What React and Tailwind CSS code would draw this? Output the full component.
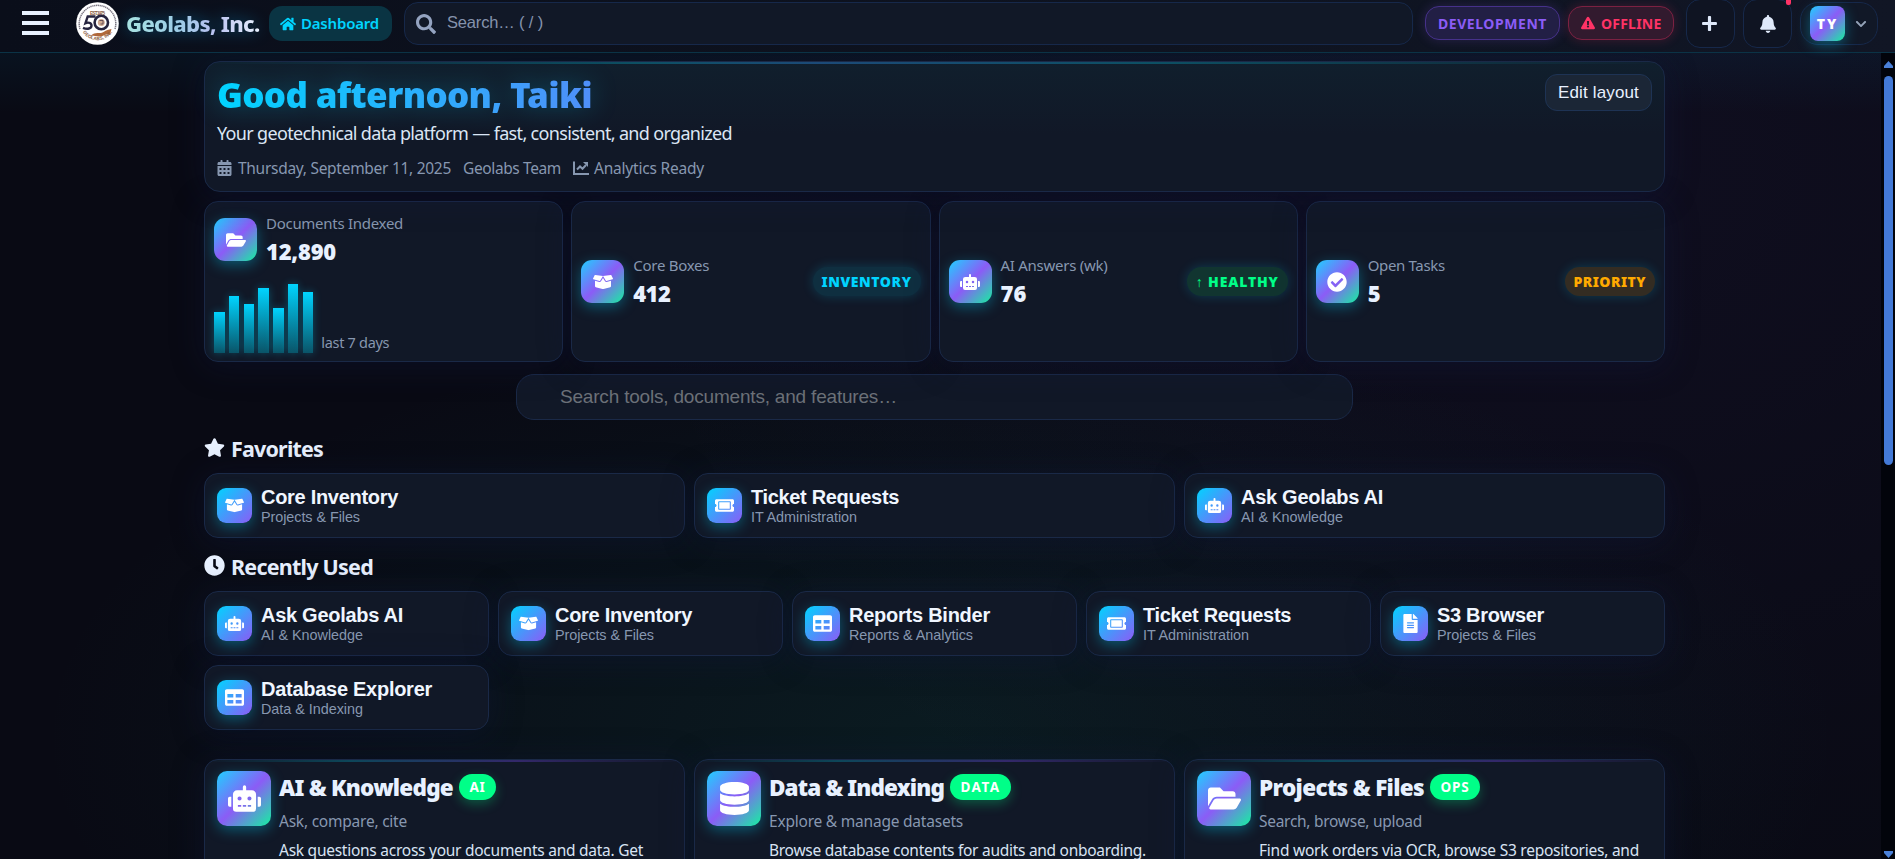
import React from "react";
import {
  FaHome, FaSearch, FaExclamationTriangle, FaPlus, FaBell, FaChevronDown,
  FaCalendarAlt, FaFolderOpen, FaBoxOpen, FaRobot, FaCheckCircle, FaStar,
  FaClock, FaTicketAlt, FaTable, FaFileAlt, FaDatabase,
} from "react-icons/fa";

const SANS = "font-['Noto_Sans','Open_Sans',sans-serif]";
const ARIAL = "font-['Liberation_Sans',Arial,sans-serif]";
const CARD = "bg-[#111827] border border-[#1a2947] shadow-[0_4px_32px_rgba(16,24,60,0.42)]";
const TRI = "bg-[linear-gradient(135deg,#1fd0ff_0%,#8b5cf6_50%,#15f0a0_100%)] shadow-[0_4px_14px_rgba(0,212,255,0.35)]";
const DUO = "bg-[linear-gradient(135deg,#00d4ff_0%,#8b5cf6_100%)] shadow-[0_4px_14px_rgba(0,212,255,0.35)]";

/* Text fitted to a fixed width by adjusting its spacing. */
function Fit({ w, children, className = "" }) {
  const ref = React.useRef(null);
  React.useLayoutEffect(() => {
    const el = ref.current;
    const fit = () => {
      el.style.letterSpacing = "0px";
      const n = el.textContent.length;
      const d = (w - el.getBoundingClientRect().width) / n;
      el.style.letterSpacing = d + "px";
    };
    fit();
    document.fonts.ready.then(fit);
  }, [w]);
  return <span ref={ref} className={"inline-block whitespace-nowrap " + className}>{children}</span>;
}

function ChartLine({ className }) {
  return (
    <svg viewBox="0 0 16 14" className={className} fill="none" stroke="currentColor" strokeWidth="2">
      <path d="M1 .5V13H16" />
      <path d="M4 8.500 7 5.500l2.500 2.300L13 4" />
      <path d="M10 1h5v5z" fill="currentColor" stroke="none" />
    </svg>
  );
}

function Logo() {
  return (
    <svg viewBox="0 0 43 43" className="h-[43px] w-[43px] shrink-0">
      <defs>
        <path id="ring" d="M4.500 24 A17.300 17.300 0 0 0 38.500 24" />
      </defs>
      <circle cx="21.500" cy="21.500" r="21.300" fill="#fff" />
      <path d="M4 27A18.300 18.300 0 1 1 39 27" fill="none" stroke="#4d4858" strokeWidth="1.500" strokeDasharray="1.300 .6" opacity=".75" />
      <text x="21.500" y="12.500" textAnchor="middle" fontFamily="Liberation Sans" fontWeight="700" fontSize="4.600" fill="#8a5a3c" textLength="15">EST.1975</text>
      <path d="M14.500 34c5-5 9-1.500 13-4 3-2 5-2.500 8-3l-1.500 5.500c-5-1-6 1.500-9.500 2-3 .3-5-1.500-10-.5z" fill="#b0683a" />
      <path d="M19.500 14.500h-7.800l-2.200 6.700c2.500-1.200 6-.6 6 2.300 0 3-4 4.300-8.500 2.300" fill="none" stroke="#26243f" strokeWidth="2.400" />
      <circle cx="25.300" cy="20.500" r="6.700" fill="#fff" stroke="#26243f" strokeWidth="2.600" />
      <circle cx="25.300" cy="20.500" r="3.500" fill="#d0ab93" />
      <path d="M23.500 18.500h3.500v3.500h-2.500" stroke="#5b4650" fill="none" strokeWidth=".9" />
      <text fontFamily="Liberation Sans" fontWeight="700" fontSize="4.600" fill="#8a5a3c"><textPath href="#ring" startOffset="50%" textAnchor="middle">GEOLABS, INC.</textPath></text>
    </svg>
  );
}

function Header() {
  return (
    <header className="relative z-20 flex h-[53px] shrink-0 border-b border-[#0b3346] bg-[linear-gradient(90deg,#0a0e1a,#0e1320_60%,#111625)]">
      <div className="ml-[22px] mt-[11px] flex h-[24px] w-[27px] flex-col justify-between">
        <i className="h-1 bg-[#e8f1ff]" /><i className="h-1 bg-[#e8f1ff]" /><i className="h-1 bg-[#e8f1ff]" />
      </div>
      <div className="ml-[27px] mt-[2px]"><Logo /></div>
      <div className="ml-[7px] mt-[7px] w-[143px] text-[22px] leading-[32px] font-extrabold drop-shadow-[0_0_8px_rgba(0,180,255,0.4)]">
        <Fit w={133.500} className="bg-[linear-gradient(90deg,#a7e3e2,#9ccbe6_40%,#b9c2f0_65%,#e8f1ff)] bg-clip-text text-transparent">Geolabs, Inc.</Fit>
      </div>
      <div className="mt-[6px] flex h-[35px] w-[123px] items-center rounded-[13px] bg-[#0a3443] pl-[11px] text-[#00d4ff]">
        <FaHome className="mr-[5px] text-[16px]" />
        <span className="text-[15px] leading-none font-semibold"><Fit w={78}>Dashboard</Fit></span>
      </div>
      <div className="ml-[12px] mt-[2px] flex h-[43px] w-[1009px] items-center rounded-[14px] border border-[#16284a] bg-[#111827] pl-[11px]">
        <FaSearch className="text-[20px] text-[#94a3c0]" />
        <span className={ARIAL + " ml-[11px] -mt-[2px] text-[16.500px] text-[#8593ad]"}><Fit w={96}>Search… ( / )</Fit></span>
      </div>
      <div className="ml-[12px] mt-[6px] flex h-[34px] w-[135px] items-center rounded-[14px] border border-[#46318a] bg-[#221f45] pl-[12px] text-[14px] font-bold text-[#8b5cf6] shadow-[0_0_12px_rgba(139,92,246,0.2)]"><Fit w={109}>DEVELOPMENT</Fit></div>
      <div className="ml-[8px] mt-[6px] flex h-[34px] w-[106px] items-center rounded-[14px] border border-[#7c2142] bg-[#321a2e] pl-[12px] text-[14px] font-bold text-[#ff3366] shadow-[0_0_12px_rgba(255,51,102,0.2)]">
        <FaExclamationTriangle className="mr-[6px] text-[14px]" /><Fit w={60.500}>OFFLINE</Fit>
      </div>
      <div className="ml-[12px] -mt-px flex h-[49px] w-[49px] items-center justify-center rounded-[14px] border border-[#16284a] bg-[#0f1422] pr-[2px] text-[#dfe9fa]"><FaPlus className="text-[17px]" /></div>
      <div className="relative ml-[8px] -mt-px flex h-[49px] w-[49px] items-center justify-center rounded-[14px] border border-[#16284a] bg-[#0f1422] text-[#dfe9fa]">
        <FaBell className="text-[18px]" />
        <i className="absolute right-0 -top-1 h-[9px] w-[5px] rounded-b-[2px] bg-[#ff3366]" />
      </div>
      <div className="ml-[8px] mt-[2px] flex h-[43px] w-[78px] items-center rounded-[18px] border border-[#16284a] bg-[#111827]">
        <div className={TRI + " ml-[9px] flex h-[35px] w-[35px] items-center justify-center rounded-[8px] text-[14px] font-black text-white"}><Fit w={21.500}>TY</Fit></div>
        <FaChevronDown className="ml-[10px] text-[12px] text-[#94a3b8]" />
      </div>
    </header>
  );
}

function Hero() {
  return (
    <section className={CARD + " relative flex h-[131px] justify-between rounded-[16px] bg-[linear-gradient(180deg,#101f2d_0%,#111827_55%)] px-[12px]"}>
      <i className="absolute inset-x-0 top-0 h-[2px] rounded-t-full bg-[linear-gradient(90deg,transparent,#0d5064_30%,#1c4a78_42%,#0d5064_65%,transparent)]" />
      <div>
        <h1 className="mt-[12px] text-[35px] leading-[42px] font-black drop-shadow-[0_0_12px_rgba(0,212,255,0.28)]">
          <Fit w={375} className="bg-[linear-gradient(90deg,#00d4ff,#4f8ff9)] bg-clip-text text-transparent">Good afternoon, Taiki</Fit>
        </h1>
        <p className="mt-[4px] text-[18px] leading-[26px] text-[#dbe6f5]"><Fit w={515}>Your geotechnical data platform — fast, consistent, and organized</Fit></p>
        <div className="mt-[11px] flex items-center text-[15.500px] leading-[22px] text-[#8797b0]">
          <FaCalendarAlt className="mr-[6px] w-[15px] text-[16px]" />
          <Fit w={213}>Thursday, September 11, 2025</Fit>
          <Fit w={98} className="ml-[12px]">Geolabs Team</Fit>
          <ChartLine className="-mt-px ml-[12px] mr-[5px] h-[14px] w-[16px]" />
          <Fit w={110}>Analytics Ready</Fit>
        </div>
      </div>
      <button className={ARIAL + " mt-[12px] h-[37px] w-[107px] rounded-[12px] border border-[#1e3354] bg-[#1b2636] text-[17px] text-[#e8f1ff]"}><Fit w={81}>Edit layout</Fit></button>
    </section>
  );
}

const BARS = [41, 57, 49, 65, 45, 69, 61];
const STATS = [
  { Icon: FaBoxOpen, label: "Core Boxes", lw: 76, value: "412", vw: 37, pill: "INVENTORY", pw: 90, cls: "bg-[#0f2f40] text-[#00d4ff]" },
  { Icon: FaRobot, label: "AI Answers (wk)", lw: 107, value: "76", vw: 26, pill: "↑ HEALTHY", pw: 83, cls: "bg-[#113530] text-[#00ff88]" },
  { Icon: FaCheckCircle, label: "Open Tasks", lw: 77, value: "5", vw: 12.500, pill: "PRIORITY", pw: 72.500, cls: "bg-[#332c22] text-[#ffaa00]" },
];

function StatHead({ Icon, label, lw, value, vw }) {
  return (
    <div className="flex">
      <div className={TRI + " mt-[7px] flex h-[43px] w-[43px] items-center justify-center rounded-[11px] text-white"}><Icon className="text-[20px]" /></div>
      <div className="-mt-[1px] ml-[9px]">
        <div className="text-[15px] leading-[26px] text-[#8797b0]"><Fit w={lw}>{label}</Fit></div>
        <div className="text-[22px] leading-[30px] font-black text-[#e8f1ff]"><Fit w={vw}>{value}</Fit></div>
      </div>
    </div>
  );
}

function Stats() {
  return (
    <section className="mt-[9px] grid h-[161px] grid-cols-4 gap-[8px]">
      <div className={CARD + " rounded-[14px] px-[9px] pt-[9px]"}>
        <StatHead Icon={FaFolderOpen} label="Documents Indexed" lw={137} value="12,890" vw={70} />
        <div className="mt-[18px] flex h-[69px] items-end">
          <div className="flex items-end gap-[4.300px]">
            {BARS.map((h, i) => (
              <i key={i} style={{ height: h }} className="w-[10.500px] bg-[linear-gradient(180deg,#00d4ff,#0a5468)] shadow-[0_0_8px_rgba(0,212,255,0.3)]" />
            ))}
          </div>
          <span className="-mb-[1px] ml-[8px] text-[14.500px] leading-[24px] text-[#8797b0]"><Fit w={68}>last 7 days</Fit></span>
        </div>
      </div>
      {STATS.map((s) => (
        <div key={s.label} className={CARD + " flex items-start justify-between rounded-[14px] px-[9px] pt-[51px]"}>
          <StatHead {...s} />
          <span className={"mt-[14px] flex h-[29px] items-center rounded-full px-[9px] text-[14px] font-black shadow-[0_0_12px_rgba(0,212,255,0.2)] " + s.cls}><Fit w={s.pw}>{s.pill}</Fit></span>
        </div>
      ))}
    </section>
  );
}

const T = {
  core: { Icon: FaBoxOpen, title: "Core Inventory", tw: 137, sub: "Projects & Files", sw: 99 },
  ticket: { Icon: FaTicketAlt, title: "Ticket Requests", tw: 148, sub: "IT Administration", sw: 106 },
  ask: { Icon: FaRobot, title: "Ask Geolabs AI", tw: 142, sub: "AI & Knowledge", sw: 102 },
  reports: { Icon: FaTable, title: "Reports Binder", tw: 141, sub: "Reports & Analytics", sw: 124 },
  s3: { Icon: FaFileAlt, title: "S3 Browser", tw: 107, sub: "Projects & Files", sw: 99 },
  db: { Icon: FaTable, title: "Database Explorer", tw: 171, sub: "Data & Indexing", sw: 102 },
};

function Tile({ Icon, title, tw, sub, sw }) {
  return (
    <div className={CARD + " flex h-[65px] items-center rounded-[14px] pl-[12px]"}>
      <div className={DUO + " flex h-[35px] w-[35px] shrink-0 items-center justify-center rounded-[9px] text-white"}><Icon className="text-[19px]" /></div>
      <div className={ARIAL + " ml-[9px] mt-[2px]"}>
        <div className="text-[20px] leading-[21px] font-bold text-[#f0f6ff]"><Fit w={tw}>{title}</Fit></div>
        <div className="text-[14.400px] leading-[18px] text-[#8797b0]"><Fit w={sw}>{sub}</Fit></div>
      </div>
    </div>
  );
}

function Heading({ Icon, w, children, className }) {
  return (
    <h2 className={"flex items-center text-[21.500px] leading-[28px] font-bold text-[#e8f1ff] " + className}>
      <Icon className="mr-[6px] -mt-[3px] text-[21px]" /><Fit w={w}>{children}</Fit>
    </h2>
  );
}

const SECTIONS = [
  { Icon: FaRobot, title: "AI & Knowledge", tw: 174, tag: "AI", gw: 16, sub: "Ask, compare, cite", sw: 128, desc: "Ask questions across your documents and data. Get", dw: 364 },
  { Icon: FaDatabase, title: "Data & Indexing", tw: 175, tag: "DATA", gw: 40, sub: "Explore & manage datasets", sw: 194, desc: "Browse database contents for audits and onboarding.", dw: 377 },
  { Icon: FaFolderOpen, title: "Projects & Files", tw: 165, tag: "OPS", gw: 29, sub: "Search, browse, upload", sw: 163, desc: "Find work orders via OCR, browse S3 repositories, and", dw: 380 },
];

function Sections() {
  return (
    <section className="mt-[29px] grid grid-cols-3 gap-[9px]">
      {SECTIONS.map((s) => (
        <div key={s.title} className={CARD + " relative flex h-[180px] rounded-[14px] px-[12px] pt-[11px]"}>
          <i className="absolute inset-x-0 top-0 h-[2px] rounded-t-full bg-[linear-gradient(90deg,transparent,#0d4659_30%,#33286a_65%,transparent)]" />
          <div className={TRI + " flex h-[55px] w-[54px] shrink-0 items-center justify-center rounded-[10px] text-white"}><s.Icon className="text-[33px]" /></div>
          <div className="ml-[8px]">
            <div className="flex items-start">
              <h3 className="mt-px text-[22.500px] leading-[32px] font-black text-[#e8f1ff]"><Fit w={s.tw}>{s.title}</Fit></h3>
              <span className="ml-[6px] mt-[3px] flex h-[26px] items-center rounded-full bg-[#00ff88] px-[10.500px] text-[13.500px] font-bold text-white shadow-[0_4px_12px_rgba(0,255,136,0.28)]"><Fit w={s.gw}>{s.tag}</Fit></span>
            </div>
            <p className="mt-[5px] text-[15.500px] leading-[24px] text-[#8797b0]"><Fit w={s.sw}>{s.sub}</Fit></p>
            <p className="mt-[5px] text-[15.500px] leading-[24px] text-[#d8e3f3]"><Fit w={s.dw}>{s.desc}</Fit></p>
          </div>
        </div>
      ))}
    </section>
  );
}

export default function App() {
  return (
    <div className={SANS + " flex h-[859px] w-[1895px] flex-col overflow-hidden bg-[#090a14] text-white"}>
      <Header />
      <div className="flex min-h-0 flex-1">
        <main className="h-full w-[1881px] overflow-hidden bg-[radial-gradient(ellipse_900px_420px_at_50%_85%,rgba(20,130,110,0.14),transparent),radial-gradient(ellipse_1000px_800px_at_85%_15%,rgba(139,92,246,0.05),transparent),linear-gradient(180deg,rgba(0,160,220,0.06),transparent_60px)] pl-[204px] pt-[8px]">
          <div className="w-[1461px]">
            <Hero />
            <Stats />
            <div className={ARIAL + " mx-auto mt-[12px] flex h-[46px] w-[837px] items-center rounded-[18px] border border-[#1a2947] bg-[#111827] pl-[43px] text-[19px] text-[#6b7078]"}><Fit w={337}>Search tools, documents, and features…</Fit></div>
            <Heading Icon={FaStar} w={92} className="mt-[15px]">Favorites</Heading>
            <div className="mt-[10px] grid grid-cols-3 gap-[9px]">{[T.core, T.ticket, T.ask].map((t) => <Tile key={t.title} {...t} />)}</div>
            <Heading Icon={FaClock} w={142} className="mt-[15px]">Recently Used</Heading>
            <div className="mt-[10px] grid grid-cols-5 gap-[9px]">{[T.ask, T.core, T.reports, T.ticket, T.s3, T.db].map((t) => <Tile key={t.title} {...t} />)}</div>
            <Sections />
          </div>
        </main>
        <div className="flex w-[14px] flex-col items-center justify-between bg-[#02040b]">
          <div className="flex flex-col items-center">
            <svg viewBox="0 0 9 7" className="mt-[8px] h-[7px] w-[9px] fill-[#4a80d8]"><path d="M4.500 0 9 5v2H0V5z" /></svg>
            <i className="mt-[8px] h-[389px] w-[9px] rounded-full bg-[#4379d6]" />
          </div>
          <svg viewBox="0 0 9 7" className="mb-[1px] h-[7px] w-[9px] fill-[#4a80d8]"><path d="M4.500 7 9 2V0H0v2z" /></svg>
        </div>
      </div>
    </div>
  );
}
